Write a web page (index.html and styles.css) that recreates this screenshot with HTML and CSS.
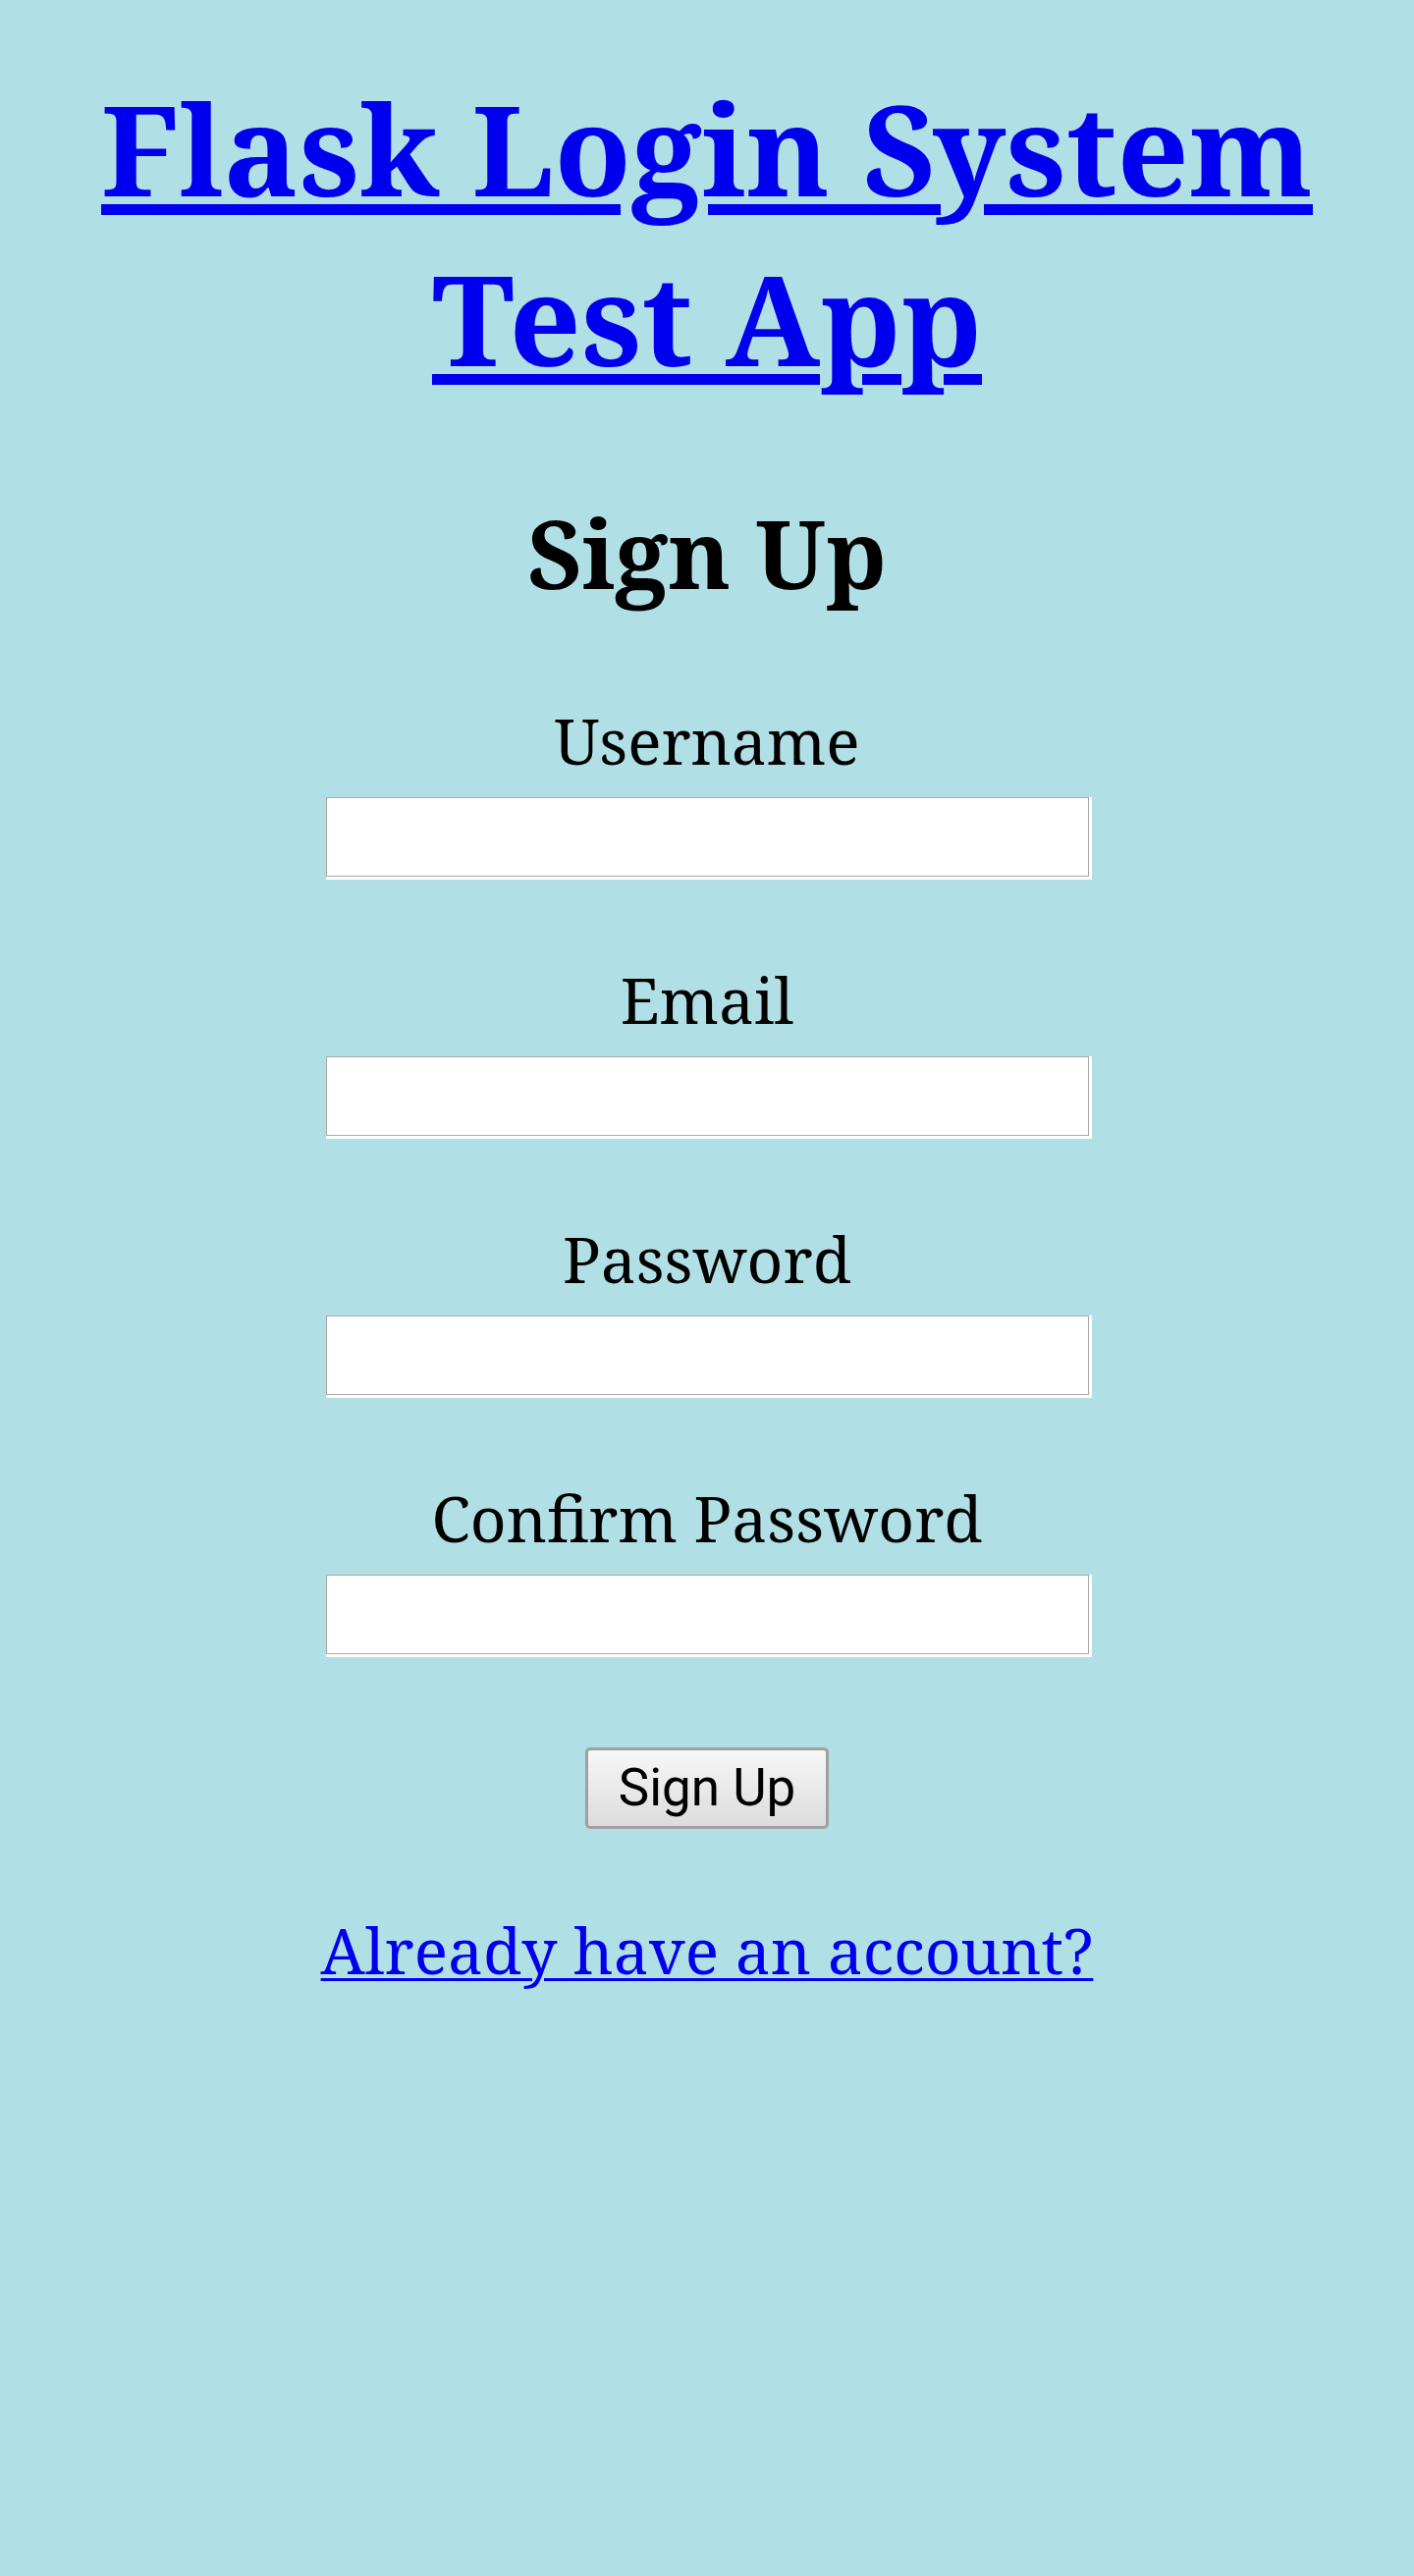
FILE: index.html
```html
<!DOCTYPE html>
<html lang="en">
<head>
<meta charset="utf-8">
<title>Sign Up - Flask Login System Test App</title>
<link rel="stylesheet" href="styles.css">
</head>
<body>
  <h1 class="site-title"><a href="#" class="site-link">Flask Login System Test App</a></h1>
  <h2 class="page-title">Sign Up</h2>
  <form class="signup-form">
    <div class="field">
      <label class="field-label" for="username">Username</label>
      <input class="field-input" type="text" id="username" name="username">
    </div>
    <div class="field">
      <label class="field-label" for="email">Email</label>
      <input class="field-input" type="email" id="email" name="email">
    </div>
    <div class="field">
      <label class="field-label" for="password">Password</label>
      <input class="field-input" type="password" id="password" name="password">
    </div>
    <div class="field">
      <label class="field-label" for="confirm">Confirm Password</label>
      <input class="field-input" type="password" id="confirm" name="confirm">
    </div>
    <button class="submit-btn" type="submit">Sign Up</button>
  </form>
  <p class="alt-link"><a href="#" class="login-link">Already have an account?</a></p>
</body>
</html>
```
FILE: styles.css
```css
html, body {
  margin: 0;
  padding: 0;
}

body {
  background: #b0e0e6;
  font-family: "Noto Serif", "DejaVu Serif", serif;
  color: #000;
  text-align: center;
}

.site-title {
  margin: 64px 0 0;
  font-size: 128px;
  line-height: 173px;
  font-weight: 700;
}

.site-link {
  color: #0000ee;
  text-decoration: underline;
  text-decoration-thickness: 11px;
  text-underline-offset: 8px;
}

.page-title {
  margin: 87px 0 0;
  font-size: 96px;
  line-height: 131px;
  font-weight: 700;
}

.signup-form {
  margin-top: 82px;
  display: flex;
  flex-direction: column;
  align-items: center;
}

.field {
  display: flex;
  flex-direction: column;
  align-items: center;
  margin-bottom: 81px;
}

.field-label {
  display: block;
  font-size: 64px;
  line-height: 90px;
}

.field-input {
  box-sizing: border-box;
  margin-top: 12px;
  width: 777px;
  height: 81px;
  border: 1px solid #a9a9a9;
  background: #fff;
  padding: 0 8px;
  font-size: 40px;
  box-shadow: 0 3px 0 #fff, 3px 0 0 #fff, 3px 3px 0 #fff;
  outline: none;
}

.submit-btn {
  box-sizing: border-box;
  margin-top: 14px;
  width: 248px;
  height: 83px;
  border: 3px solid #a0a0a0;
  border-radius: 5px;
  background: linear-gradient(#f7f7f7, #dcdcdc);
  font-family: Roboto, "Noto Sans", sans-serif;
  font-size: 53px;
  color: #000;
  padding: 0;
  line-height: 1;
}

.alt-link {
  margin: 79px 0 0;
  font-size: 64px;
  line-height: 90px;
}

.login-link {
  color: #0000ee;
  text-decoration: underline;
  text-decoration-thickness: 3px;
  text-underline-offset: 4px;
}
```
